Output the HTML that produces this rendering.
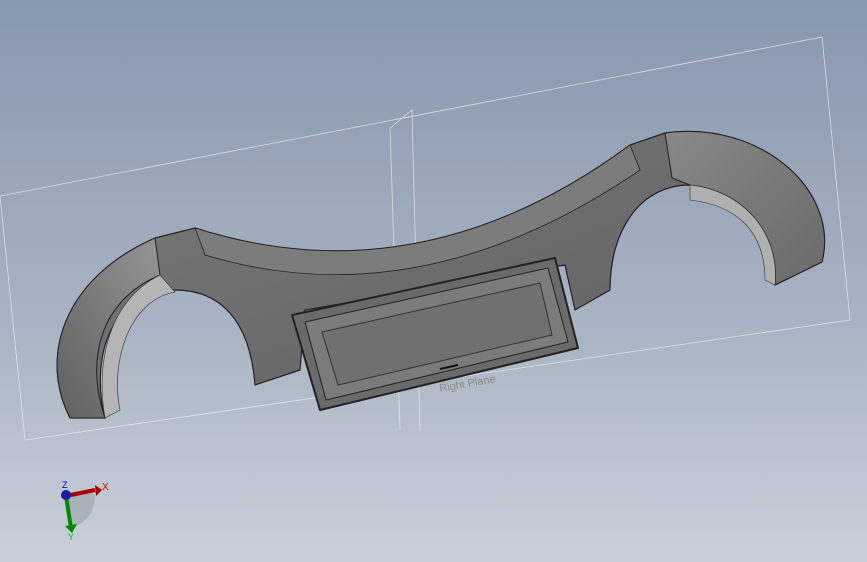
<!DOCTYPE html>
<html><head><style>html,body{margin:0;padding:0;width:867px;height:562px;overflow:hidden}</style></head>
<body>
<svg width="867" height="562" viewBox="0 0 867 562" xmlns="http://www.w3.org/2000/svg">
<defs>
<linearGradient id="bg" x1="0" y1="0" x2="0" y2="1">
<stop offset="0" stop-color="#8797ad"/><stop offset="0.6" stop-color="#aab5c4"/><stop offset="1" stop-color="#c9cfd8"/></linearGradient>
<linearGradient id="body" x1="0" y1="0" x2="1" y2="1">
<stop offset="0" stop-color="#7a7a7a"/><stop offset="0.5" stop-color="#6c6c6c"/><stop offset="1" stop-color="#5e5e5e"/></linearGradient>
<linearGradient id="arcL" x1="0" y1="1" x2="1" y2="0"><stop offset="0" stop-color="#606060"/><stop offset="1" stop-color="#959595"/></linearGradient>
<linearGradient id="arcR" x1="0" y1="0" x2="1" y2="1"><stop offset="0" stop-color="#888"/><stop offset="1" stop-color="#6a6a6a"/></linearGradient>
</defs>
<rect width="867" height="562" fill="url(#bg)"/>
<g stroke="#e8ecf0" stroke-width="0.8" fill="none" opacity="0.8">
<polygon points="0,196 822,37 850,320 25,440"/>
<polyline points="390,128 412,110 420,430"/>
<line x1="390" y1="128" x2="400" y2="430"/>
</g>
<path d="M70,418 C40,360 60,280 155,238 L195,228 Q420,300 630,145 L665,133 C760,120 840,190 822,262 L775,285 C780,230 740,190 690,185 C640,185 610,230 610,290 L575,310 L565,265 L305,310 L300,370 L255,385 C250,320 220,290 175,290 C110,290 90,360 105,418 Z" fill="url(#body)" stroke="#222" stroke-width="1.2"/>
<path d="M70,418 C40,360 60,280 155,238 L160,275 C100,300 85,360 105,418 Z" fill="url(#arcL)" stroke="#222"/>
<path d="M665,133 C760,120 840,190 822,262 L775,285 C780,230 740,190 690,185 L672,178 Z" fill="url(#arcR)" stroke="#222"/>
<path d="M195,228 Q420,300 630,145 L640,170 Q420,320 205,255 Z" fill="#7c7c7c" stroke="#222" stroke-width="0.8"/>
<path d="M160,275 C110,300 95,360 105,418 L120,410 C110,360 130,300 175,292 Z" fill="#b5b5b5" stroke="#333" stroke-width="0.6"/>
<path d="M690,185 C740,190 780,230 775,285 L765,280 C765,230 735,205 690,200 Z" fill="#b0b0b0" stroke="#333" stroke-width="0.6"/>
<polygon points="292,315 555,258 578,348 320,410" fill="#6a6a6a" stroke="#222" stroke-width="2" stroke-linejoin="round"/>
<polygon points="305,322 548,268 568,342 326,400" fill="#7b7b7b" stroke="#222" stroke-linejoin="round"/>
<polygon points="322,332 540,283 552,335 338,385" fill="#707070" stroke="#333"/>
<line x1="440" y1="369" x2="458" y2="365" stroke="#111" stroke-width="2"/>
<text x="440" y="392" font-family="Liberation Sans,sans-serif" font-size="11" fill="#8a8a8a" transform="rotate(-10 440 392)">Right Plane</text>
<g>
<path d="M65,495 A30,30 0 0 1 95,495 A32,32 0 0 1 70,528 Z" fill="#9aa2ac" opacity="0.6"/>
<line x1="66" y1="496" x2="95" y2="490" stroke="#a00" stroke-width="4"/>
<polygon points="95,485 102,490 96,496" fill="#a00"/>
<line x1="66" y1="496" x2="71" y2="528" stroke="#080" stroke-width="4"/>
<polygon points="65,526 72,533 77,524" fill="#080"/>
<circle cx="66" cy="495" r="5" fill="#1a1aa0"/>
<text x="102" y="490" font-family="Liberation Sans,sans-serif" font-size="10" fill="#e00">X</text>
<text x="62" y="488" font-family="Liberation Sans,sans-serif" font-size="9" fill="#00c">Z</text>
<text x="68" y="540" font-family="Liberation Sans,sans-serif" font-size="9" fill="#0c0">Y</text>
</g>
</svg>
</body></html>
